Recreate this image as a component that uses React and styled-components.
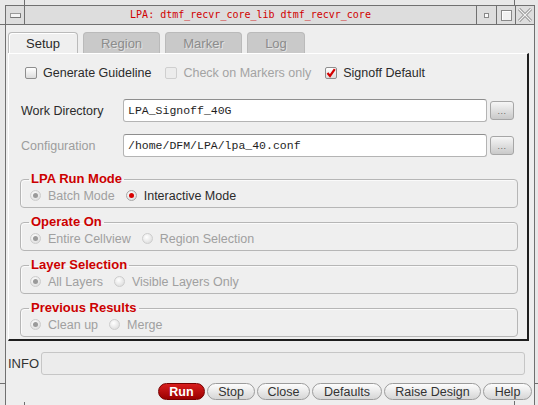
import React from "react";
import styled, { createGlobalStyle, css } from "styled-components";

// ================= Global =================
const GlobalStyle = createGlobalStyle`
  html, body { margin: 0; padding: 0; background: #e8e8e8; }
  body {
    font-family: "Liberation Sans", Arial, sans-serif;
    font-size: 12.5px;
    color: #2b2b2b;
  }
  * { box-sizing: border-box; }
`;

// ================= Desktop & window frame =================
const Desktop = styled.div`
  position: relative;
  width: 538px;
  height: 405px;
  overflow: hidden;
  background: #e8e8e8;
  padding: 5px 3px 0 5px;
`;

const DeskLine = styled.div`
  position: absolute;
  left: ${(p) => p.$x}px;
  top: ${(p) => p.$y}px;
  width: ${(p) => p.$w}px;
  height: ${(p) => p.$h}px;
  background: #6f6f6f;
`;

const Window = styled.div`
  width: 530px;
  height: 410px;
  border: 1px solid #707070;
  border-bottom: none;
  background: #eeeeee;
  display: flex;
  flex-direction: column;
`;

const TitleBar = styled.div`
  height: 19px;
  display: flex;
  background: #dddddd;
  border-bottom: 1px solid #707070;
`;

const FrameButton = styled.div`
  width: ${(p) => p.$w || 19}px;
  display: flex;
  align-items: center;
  justify-content: center;
  ${(p) => (p.$left ? "border-left: 1px solid #707070;" : "border-right: 1px solid #707070;")}
`;

const MenuGlyph = styled.div`
  width: 11px;
  height: 5px;
  margin-top: 1px;
  background: #f4f4f4;
  border: 1px solid #9a9a9a;
  border-right-color: #777;
  border-bottom-color: #777;
`;

const MinGlyph = styled.div`
  width: 5px;
  height: 5px;
  margin-top: 1px;
  background: #fafafa;
  border: 1px solid #888;
`;

const MaxGlyph = styled.div`
  width: 11px;
  height: 11px;
  margin-top: 1px;
  background: #f2f2f2;
  border: 1px solid #888;
  box-shadow: inset 1px 1px 0 #fff;
`;

const Title = styled.div`
  flex: 1;
  text-align: center;
  font-family: "DejaVu Sans Mono", "Liberation Mono", monospace;
  font-size: 10px;
  line-height: 18px;
  color: #d00000;
`;

// ================= Body =================
const Body = styled.div`
  flex: 1;
  display: flex;
  flex-direction: column;
  padding: 7px 5px 0 2px;
`;

const TabBar = styled.div`
  display: flex;
  gap: 5px;
  height: 21px;
`;

const Tab = styled.div`
  width: ${(p) => p.$w}px;
  height: 21px;
  border: 1px solid #bababa;
  border-bottom: none;
  border-radius: 4px 4px 0 0;
  display: flex;
  align-items: center;
  justify-content: center;
  font-size: 13px;
  ${(p) =>
    p.$active
      ? css`
          background: #efefef;
          color: #2a2a2a;
          box-shadow: inset 1px 1px 0 #fff;
        `
      : css`
          background: #c9c9c9;
          color: #8c8c8c;
          text-shadow: 1px 1px 0 #e4e4e4;
        `}
`;

const Panel = styled.div`
  height: 288px;
  background: #efefef;
  border-top: 1px solid #ffffff;
  border-left: 1px solid #ffffff;
  border-right: 2px solid #1e1e1e;
  border-bottom: 2px solid #1e1e1e;
  display: flex;
  flex-direction: column;
  padding: 11px 9px 0 11px;
`;

// ================= Checkboxes =================
const CheckRow = styled.div`
  height: 16px;
  display: flex;
  align-items: center;
  gap: 14px;
  padding-left: 5px;
`;

const CheckItem = styled.label`
  display: flex;
  align-items: center;
  gap: 6px;
  color: ${(p) => (p.$disabled ? "#a3a3a3" : "#2b2b2b")};
`;

const CheckBox = styled.span`
  width: 12px;
  height: 12px;
  border-radius: 2px;
  border: 1px solid ${(p) => (p.$disabled ? "#cfcfcf" : "#8e8e8e")};
  background: ${(p) =>
    p.$disabled ? "#ececec" : "linear-gradient(#ffffff, #dcdcdc)"};
  display: flex;
  align-items: center;
  justify-content: center;
`;

const Check = ({ label, checked, disabled }) => (
  <CheckItem $disabled={disabled}>
    <CheckBox $disabled={disabled}>
      {checked && (
        <svg width="10" height="10" viewBox="0 0 10 10">
          <path d="M1.5 5 L4 8 L8.8 1.2" fill="none" stroke="#d40000" strokeWidth="2.2" />
        </svg>
      )}
    </CheckBox>
    {label}
  </CheckItem>
);

// ================= Field rows =================
const FieldRow = styled.div`
  display: flex;
  align-items: center;
  height: 23px;
  margin-top: ${(p) => p.$mt}px;
  padding-right: 4px;
`;

const FieldLabel = styled.div`
  width: 103px;
  padding-left: 1px;
  color: ${(p) => (p.$disabled ? "#9d9d9d" : "#2b2b2b")};
`;

const TextBox = styled.div`
  flex: 1;
  height: 23px;
  background: #ffffff;
  border: 1px solid #b4b4b4;
  border-top-color: #8e8e8e;
  border-radius: 3px;
  padding-left: 4px;
  display: flex;
  align-items: center;
  font-family: "Liberation Mono", "Courier New", monospace;
  font-size: 11.5px;
  color: #1e1e1e;
`;

const BrowseButton = styled.div`
  width: 24px;
  height: 19px;
  margin-left: 3px;
  border: 1px solid #a6a6a6;
  border-radius: 3px;
  background: linear-gradient(#f6f6f6, #c9c9c9);
  color: #666;
  font-size: 9px;
  display: flex;
  align-items: center;
  justify-content: center;
  letter-spacing: 0.5px;
`;

// ================= Groups =================
const Group = styled.fieldset`
  margin: ${(p) => p.$mt}px 0 0 0;
  padding: 0 8px 2px 8px;
  min-width: 0;
  border: 1px solid #b6b6b6;
  border-radius: 4px;
  box-shadow: inset 1px 1px 0 #fafafa;
`;

const GroupTitle = styled.legend`
  padding: 0 2px;
  font-size: 13px;
  font-weight: bold;
  line-height: 14px;
  color: #cc0000;
`;

const RadioRow = styled.div`
  height: 19px;
  display: flex;
  align-items: center;
  gap: 11px;
  padding-left: 1px;
`;

const RadioItem = styled.label`
  display: flex;
  align-items: center;
  gap: 7px;
  color: ${(p) => (p.$disabled ? "#a0a0a0" : "#2b2b2b")};
`;

const RadioDot = styled.span`
  width: 11px;
  height: 11px;
  border-radius: 50%;
  border: 1px solid ${(p) => (p.$disabled ? "#cdcdcd" : "#a8a8a8")};
  background: radial-gradient(circle at 40% 35%, #ffffff, #d6d6d6);
  display: flex;
  align-items: center;
  justify-content: center;

  &::after {
    content: "";
    display: ${(p) => (p.$on ? "block" : "none")};
    width: 5px;
    height: 5px;
    border-radius: 50%;
    background: ${(p) => (p.$disabled ? "#9a9a9a" : "#d80000")};
  }
`;

const Radio = ({ label, on, disabled }) => (
  <RadioItem $disabled={disabled}>
    <RadioDot $on={on} $disabled={disabled} />
    {label}
  </RadioItem>
);

// ================= Footer =================
const InfoRow = styled.div`
  display: flex;
  align-items: center;
  margin-top: 11px;
  padding-right: 4px;
`;

const InfoLabel = styled.div`
  width: 33px;
  font-size: 13px;
  color: #333;
`;

const InfoBox = styled.div`
  flex: 1;
  height: 23px;
  background: #ececec;
  border: 1px solid #c6c6c6;
  border-radius: 3px;
`;

const ButtonRow = styled.div`
  display: flex;
  justify-content: flex-end;
  gap: 2px;
  margin-top: 8px;
  margin-right: -3px;
`;

const Button = styled.div`
  width: ${(p) => p.$w}px;
  height: 17px;
  border-radius: 9px;
  display: flex;
  align-items: center;
  justify-content: center;
  font-size: 12.5px;
  ${(p) =>
    p.$primary
      ? css`
          background: linear-gradient(#d81d1d, #9a0000);
          border: 1px solid #760000;
          color: #ffffff;
          font-weight: bold;
        `
      : css`
          background: linear-gradient(#fdfdfd, #d6d6d6);
          border: 1px solid #9c9c9c;
          color: #333;
        `}
`;

// ================= Main App =================
const App = () => (
  <>
    <GlobalStyle />
    <Desktop>
      <DeskLine $x={24} $y={0} $w={1} $h={6} />
      <DeskLine $x={0} $y={24} $w={6} $h={1} />
      <DeskLine $x={514} $y={0} $w={1} $h={6} />
      <DeskLine $x={0} $y={383} $w={6} $h={1} />
      <DeskLine $x={24} $y={402} $w={1} $h={4} />
      <DeskLine $x={535} $y={383} $w={3} $h={1} />
      <DeskLine $x={514} $y={401} $w={1} $h={4} />

      <Window>
        <TitleBar>
          <FrameButton $w={19}>
            <MenuGlyph />
          </FrameButton>
          <Title>LPA: dtmf_recvr_core_lib dtmf_recvr_core</Title>
          <FrameButton $left $w={20}>
            <MinGlyph />
          </FrameButton>
          <FrameButton $left>
            <MaxGlyph />
          </FrameButton>
          <FrameButton $left>
            <svg width="14" height="14" viewBox="0 0 14 14">
              <path d="M1 1 L13 13 M13 1 L1 13" stroke="#8a8a8a" strokeWidth="3" />
              <path d="M1 1 L13 13 M13 1 L1 13" stroke="#f2f2f2" strokeWidth="1.2" />
            </svg>
          </FrameButton>
        </TitleBar>

        <Body>
          <TabBar>
            <Tab $active $w={70}>Setup</Tab>
            <Tab $w={77}>Region</Tab>
            <Tab $w={77}>Marker</Tab>
            <Tab $w={58}>Log</Tab>
          </TabBar>

          <Panel>
            <CheckRow>
              <Check label="Generate Guideline" />
              <Check label="Check on Markers only" disabled />
              <Check label="Signoff Default" checked />
            </CheckRow>

            <FieldRow $mt={18}>
              <FieldLabel>Work Directory</FieldLabel>
              <TextBox>LPA_Signoff_40G</TextBox>
              <BrowseButton>...</BrowseButton>
            </FieldRow>
            <FieldRow $mt={12}>
              <FieldLabel $disabled>Configuration</FieldLabel>
              <TextBox>/home/DFM/LPA/lpa_40.conf</TextBox>
              <BrowseButton>...</BrowseButton>
            </FieldRow>

            <Group $mt={15}>
              <GroupTitle>LPA Run Mode</GroupTitle>
              <RadioRow>
                <Radio label="Batch Mode" on disabled />
                <Radio label="Interactive Mode" on />
              </RadioRow>
            </Group>
            <Group $mt={7}>
              <GroupTitle>Operate On</GroupTitle>
              <RadioRow>
                <Radio label="Entire Cellview" on disabled />
                <Radio label="Region Selection" disabled />
              </RadioRow>
            </Group>
            <Group $mt={7}>
              <GroupTitle>Layer Selection</GroupTitle>
              <RadioRow>
                <Radio label="All Layers" on disabled />
                <Radio label="Visible Layers Only" disabled />
              </RadioRow>
            </Group>
            <Group $mt={7}>
              <GroupTitle>Previous Results</GroupTitle>
              <RadioRow>
                <Radio label="Clean up" on disabled />
                <Radio label="Merge" disabled />
              </RadioRow>
            </Group>
          </Panel>

          <InfoRow>
            <InfoLabel>INFO</InfoLabel>
            <InfoBox />
          </InfoRow>

          <ButtonRow>
            <Button $primary $w={47}>Run</Button>
            <Button $w={48}>Stop</Button>
            <Button $w={53}>Close</Button>
            <Button $w={70}>Defaults</Button>
            <Button $w={97}>Raise Design</Button>
            <Button $w={49}>Help</Button>
          </ButtonRow>
        </Body>
      </Window>
    </Desktop>
  </>
);

export default App;
